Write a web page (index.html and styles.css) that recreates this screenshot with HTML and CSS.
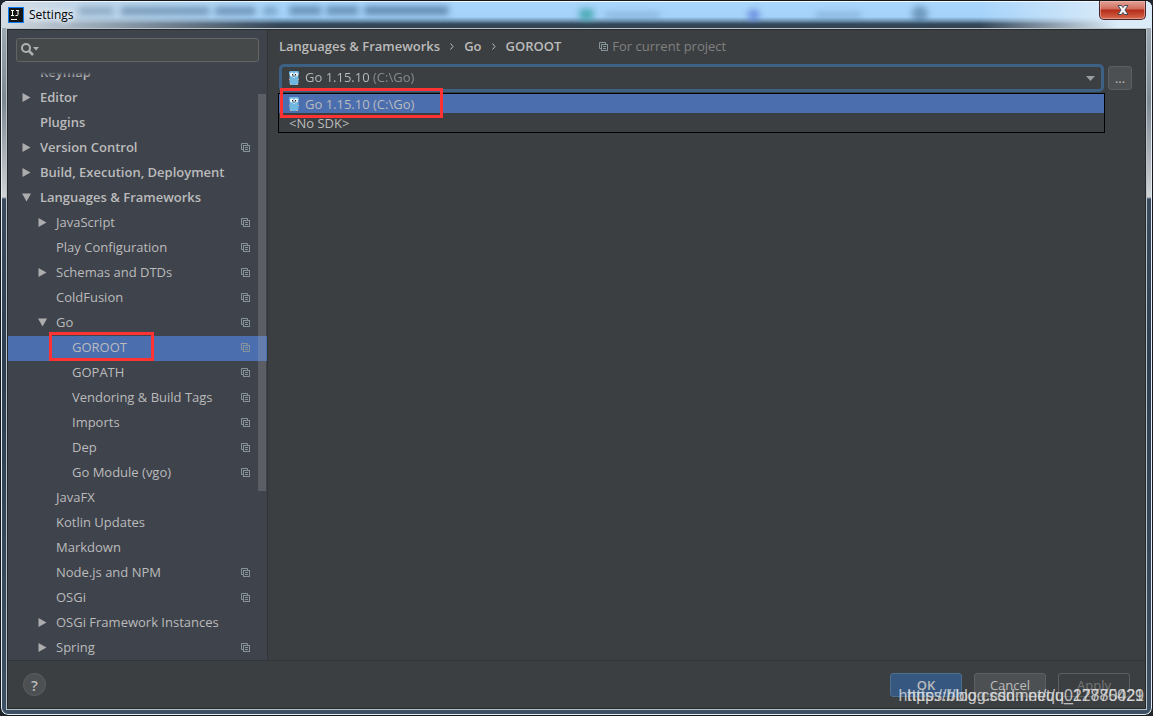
FILE: index.html
```
<!DOCTYPE html>
<html lang="en">
<head>
  <meta charset="UTF-8">
  <title>Settings</title>
  <link rel="stylesheet" href="styles.css">
</head>
<body>
  <svg class="defs" aria-hidden="true">
    <symbol id="copy" viewBox="0 0 9 9">
      <path d="M6.5 2V.5h-6v6H2" />
      <rect x="2.5" y="2.5" width="6" height="6" />
      <path d="M4 4.5h3M4 6.5h3" />
    </symbol>
    <symbol id="right" viewBox="0 0 8 9"><path d="M0 0l8 4.500l-8 4.500z" /></symbol>
    <symbol id="down" viewBox="0 0 9 8"><path d="M0 0h9l-4.500 8z" /></symbol>
    <symbol id="gopher" viewBox="0 0 10 14">
      <path fill="#6fb6e0" d="M1 0h8l1 1v2l-.500 1v8.500l-1 1.500h-7l-1-1.500v-8.500l-.500-1v-2z" />
      <path fill="#d9a88c" d="M0 8h1v1h-1zM9 8h1v1h-1zM1 13h1.500v1h-1.500zM7.500 13h1.500v1h-1.500z" />
      <circle cx="2.900" cy="3.500" r="1.900" fill="#fff" />
      <circle cx="7.100" cy="3.500" r="1.900" fill="#fff" />
      <path fill="#222" d="M3 3h1.200v1.500h-1.200zM6 3h1.200v1.500h-1.200zM4.300 4.800h1.400v.800h-1.400z" />
      <path fill="#fff" d="M4.300 5.800h1.400v1h-1.400z" />
    </symbol>
  </svg>

  <div class="window">
    <header class="titlebar">
      <svg class="behind" viewBox="0 0 1150 27" preserveAspectRatio="none" aria-hidden="true">
        <g fill="#3a5f85">
          <rect x="78" y="6" width="34" height="8" opacity=".35" />
          <rect x="120" y="6" width="88" height="8" opacity=".5" />
          <rect x="214" y="6" width="40" height="8" opacity=".55" />
          <rect x="262" y="6" width="14" height="8" opacity=".4" />
          <rect x="288" y="5" width="32" height="9" opacity=".55" />
          <rect x="325" y="5" width="32" height="9" opacity=".55" />
          <rect x="363" y="5" width="84" height="9" opacity=".6" />
          <rect x="604" y="11" width="54" height="6" opacity=".25" />
          <rect x="814" y="11" width="45" height="6" opacity=".25" />
          <circle cx="918" cy="13" r="8" opacity=".5" />
        </g>
        <rect x="578" y="8" width="14" height="11" fill="#2a9a9a" opacity=".7" />
        <circle cx="752" cy="14" r="6" fill="#4a68d0" opacity=".6" />
      </svg>
      <svg class="logo" viewBox="0 0 16 16" aria-hidden="true">
        <rect width="16" height="16" fill="#087cfa" />
        <rect x="1" y="1" width="14" height="14" fill="#161616" />
        <path d="M3 3.500h3M4.500 3.500v5M3 8.500h3M8 3.500h3M10 3.500v4q0 1-1 1h-1.500M3 12.500h6" fill="none" stroke="#fff" />
      </svg>
      <span class="title">Settings</span>
      <button class="close" aria-label="Close">
        <svg viewBox="0 0 12 10" aria-hidden="true">
          <path d="M1 .5h3.500l1.500 2l1.500-2h3.500l-3 4.500l3 4.500h-3.500l-1.500-2l-1.500 2h-3.500l3-4.500z" fill="#f5f5f5" stroke="#434859" />
        </svg>
      </button>
    </header>

    <div class="frame">
      <div class="main">
        <aside class="sidebar">
          <div class="search">
            <svg viewBox="0 0 18 14" aria-hidden="true">
              <circle cx="5" cy="5" r="4" fill="none" stroke="#afb1b3" stroke-width="2" />
              <path d="M8 8l4 4" stroke="#afb1b3" stroke-width="2.500" />
              <path d="M12 4h6l-3 3.500z" fill="#afb1b3" />
            </svg>
            <input type="text" aria-label="Search settings">
          </div>
          <nav class="tree">
            <ul>
              <li class="top"><a href="#">Keymap</a></li>
              <li class="top"><svg class="arrow"><use href="#right" /></svg><a href="#">Editor</a></li>
              <li class="top"><a href="#">Plugins</a></li>
              <li class="top"><svg class="arrow"><use href="#right" /></svg><a href="#">Version Control</a><svg class="copy"><use href="#copy" /></svg></li>
              <li class="top"><svg class="arrow"><use href="#right" /></svg><a href="#">Build, Execution, Deployment</a></li>
              <li class="top"><svg class="arrow"><use href="#down" /></svg><a href="#">Languages &amp; Frameworks</a></li>
              <li class="sub"><svg class="arrow"><use href="#right" /></svg><a href="#">JavaScript</a><svg class="copy"><use href="#copy" /></svg></li>
              <li class="sub"><a href="#">Play Configuration</a><svg class="copy"><use href="#copy" /></svg></li>
              <li class="sub"><svg class="arrow"><use href="#right" /></svg><a href="#">Schemas and DTDs</a><svg class="copy"><use href="#copy" /></svg></li>
              <li class="sub"><a href="#">ColdFusion</a><svg class="copy"><use href="#copy" /></svg></li>
              <li class="sub"><svg class="arrow"><use href="#down" /></svg><a href="#">Go</a><svg class="copy"><use href="#copy" /></svg></li>
              <li class="leaf selected"><a href="#">GOROOT</a><svg class="copy"><use href="#copy" /></svg><span class="mark"></span></li>
              <li class="leaf"><a href="#">GOPATH</a><svg class="copy"><use href="#copy" /></svg></li>
              <li class="leaf"><a href="#">Vendoring &amp; Build Tags</a><svg class="copy"><use href="#copy" /></svg></li>
              <li class="leaf"><a href="#">Imports</a><svg class="copy"><use href="#copy" /></svg></li>
              <li class="leaf"><a href="#">Dep</a><svg class="copy"><use href="#copy" /></svg></li>
              <li class="leaf"><a href="#">Go Module (vgo)</a><svg class="copy"><use href="#copy" /></svg></li>
              <li class="sub"><a href="#">JavaFX</a></li>
              <li class="sub"><a href="#">Kotlin Updates</a></li>
              <li class="sub"><a href="#">Markdown</a></li>
              <li class="sub"><a href="#">Node.js and NPM</a><svg class="copy"><use href="#copy" /></svg></li>
              <li class="sub"><a href="#">OSGi</a><svg class="copy"><use href="#copy" /></svg></li>
              <li class="sub"><svg class="arrow"><use href="#right" /></svg><a href="#">OSGi Framework Instances</a></li>
              <li class="sub"><svg class="arrow"><use href="#right" /></svg><a href="#">Spring</a><svg class="copy"><use href="#copy" /></svg></li>
            </ul>
            <div class="thumb"></div>
          </nav>
        </aside>

        <main class="panel">
          <div class="crumbs">
            <b>Languages &amp; Frameworks</b>
            <svg class="sep" viewBox="0 0 4 7"><path d="M.5 .5l2.500 3l-2.500 3" /></svg>
            <b>Go</b>
            <svg class="sep" viewBox="0 0 4 7"><path d="M.5 .5l2.500 3l-2.500 3" /></svg>
            <b>GOROOT</b>
            <span class="scope"><svg class="copy"><use href="#copy" /></svg>For current project</span>
          </div>
          <div class="sdk">
            <div class="combo">
              <select aria-label="GOROOT">
                <option>Go 1.15.10 (C:\Go)</option>
                <option>&lt;No SDK&gt;</option>
              </select>
              <svg class="gopher"><use href="#gopher" /></svg>
              <svg class="caret" viewBox="0 0 9 5"><path d="M0 0h9l-4.500 5z" /></svg>
              <ul class="popup" role="listbox" aria-label="SDK">
                <li class="selected" role="option" aria-selected="true"><svg class="gopher"><use href="#gopher" /></svg>Go 1.15.10 (C:\Go)<span class="mark"></span></li>
                <li role="option">&lt;No SDK&gt;</li>
              </ul>
            </div>
            <button class="more">...</button>
          </div>
        </main>
      </div>

      <footer class="footer">
        <button class="help">?</button>
        <button class="btn ok">OK</button>
        <button class="btn">Cancel</button>
        <button class="btn apply" disabled>Apply</button>
      </footer>
    </div>
    <div class="watermark">https://blog.csdn.net/qq_27870421</div>
    <div class="watermark">https://blog.csdn.net/u012785029</div>
  </div>
</body>
</html>
```

FILE: styles.css
```
* {
  box-sizing: border-box;
}

body {
  margin: 0;
  background: #20262c;
  color: #bbbbbb;
  font-family: "Open Sans", "Noto Sans", sans-serif;
  font-size: 13px;
  line-height: 18px;
}

ul {
  list-style: none;
  margin: 0;
  padding: 0;
}

a {
  color: inherit;
  text-decoration: none;
}

b {
  font-weight: 600;
}

button,
input,
select {
  font: inherit;
  color: inherit;
}

.defs {
  position: absolute;
  width: 0;
  height: 0;
}

.window {
  position: relative;
  display: flex;
  flex-direction: column;
  min-height: 100vh;
  padding: 0 5px 5px;
  border: 1px solid #14181c;
  border-radius: 8px;
  background: linear-gradient(#a9b3bd, #7d8791 100px, #d0d3d6 196px, #3a4b5e 198px, #2c3e50 50%, #3d5064);
  box-shadow: inset 0 0 0 1px #e4edf3;
}

/* title bar */
.titlebar {
  position: relative;
  display: flex;
  align-items: center;
  gap: 5px;
  height: 27px;
  margin: 0 -5px;
  padding-left: 7px;
  border-radius: 7px 7px 0 0;
  background: linear-gradient(#a9d6fb, #a4d2f9 16px, #6d90ae 20px, #34495d 23px, #34414e);
  box-shadow: inset 0 1px #f4faff;
  overflow: hidden;
}

.titlebar::before {
  content: "";
  position: absolute;
  inset: 1px 0 0;
  background: linear-gradient(90deg, #d5dce3 0, #c8d6e2bb 80px, #c0d8ee00 280px, #c0d8ee00 85%, #dcebf8 97%);
}

.behind {
  position: absolute;
  inset: 0;
  width: 100%;
  height: 27px;
  filter: blur(3px);
}

.logo {
  position: relative;
  width: 16px;
  height: 16px;
}

.title {
  position: relative;
  color: #000000;
  font-size: 12px;
  text-shadow: 0 0 6px #ffffff, 0 0 10px #ffffff;
}

.close {
  position: relative;
  display: flex;
  align-items: center;
  justify-content: center;
  align-self: flex-start;
  width: 47px;
  height: 19px;
  margin: 0 6px 0 auto;
  padding: 0;
  border: 1px solid #47222a;
  border-top: 0;
  border-radius: 0 0 5px 5px;
  background: linear-gradient(#e3a398, #cf6c5c 8px, #b52c17 9px, #d5684d);
  box-shadow: inset 0 0 0 1px #f0b9ad99;
}

.close svg {
  width: 12px;
  height: 10px;
}

/* dialog body */
.frame {
  display: flex;
  flex-direction: column;
  flex: 1;
  border: 1px solid #b9c3ca;
  outline: 1px solid #25292c;
  outline-offset: -2px;
  padding: 1px;
  background: #3c3f41;
}

.main {
  display: flex;
  flex: 1;
  border-bottom: 1px solid #323537;
}

.sidebar {
  display: flex;
  flex-direction: column;
  width: 260px;
  border-right: 1px solid #323537;
  background: #3f434c;
}

.search {
  display: flex;
  align-items: center;
  height: 24px;
  margin: 8px 8px 10px;
  padding-left: 4px;
  border: 1px solid #646464;
  border-radius: 3px;
  background: #45494a;
}

.search svg {
  width: 18px;
  height: 14px;
}

.search input {
  flex: 1;
  min-width: 0;
  border: 0;
  outline: 0;
  background: none;
}

/* the row heights fill the sidebar exactly, the last one ends on the footer line */
.tree {
  position: relative;
  flex: 1;
  overflow: hidden;
}

.tree::before {
  content: "";
  position: absolute;
  z-index: 1;
  inset: 0 0 auto;
  height: 5px;
  background: linear-gradient(#3f434c, #3f434c00);
}

.tree ul {
  margin-top: -11px;
  margin-bottom: -1px;
}

.tree li {
  position: relative;
  display: flex;
  align-items: center;
  height: 25px;
  padding-right: 17px;
  padding-bottom: 2px;
}

.tree a {
  padding-bottom: 2px;
}

.tree .top {
  padding-left: 32px;
  font-weight: 600;
}

.tree .sub {
  padding-left: 48px;
}

.tree .leaf {
  padding-left: 64px;
}

.arrow {
  width: 9px;
  height: 9px;
  margin-left: -18px;
  margin-right: 9px;
  fill: #adadad;
}

.copy {
  width: 9px;
  height: 9px;
  fill: none;
  stroke: #87939a;
}

.tree .copy {
  margin-left: auto;
}

.selected {
  background: #4b6eaf;
}

.mark {
  position: absolute;
  border: 3px solid #ff3333;
}

.tree .mark {
  left: 41px;
  top: -4px;
  width: 105px;
  height: 29px;
}

.thumb {
  position: absolute;
  top: 22px;
  right: 1px;
  width: 8px;
  height: 397px;
  background: #a6a6a647;
}

/* right side */
.panel {
  flex: 1;
  min-width: 0;
  padding: 7px 13px 0 11px;
}

.crumbs {
  display: flex;
  align-items: center;
  gap: 10px;
}

.sep {
  width: 4px;
  height: 7px;
  fill: none;
  stroke: #bbbbbb;
}

.scope {
  display: flex;
  align-items: center;
  gap: 4px;
  margin-left: 28px;
  color: #808080;
}

.sdk {
  display: flex;
  align-items: center;
  gap: 4px;
  margin-top: 9px;
}

.combo {
  position: relative;
  flex: 1;
}

.combo select {
  display: block;
  width: 100%;
  height: 28px;
  padding: 0 23px 2px;
  border: 3px solid #3d6185;
  border-radius: 5px;
  outline: 0;
  appearance: none;
  color: transparent;
  background:
    linear-gradient(90deg, #bbbbbb 88px, #8c8c8c 88px) text,
    #3c3f41;
}

.combo option {
  color: #bbbbbb;
}

.gopher {
  width: 10px;
  height: 14px;
}

.combo > .gopher {
  position: absolute;
  left: 10px;
  top: 7px;
}

.caret {
  position: absolute;
  right: 9px;
  top: 12px;
  width: 9px;
  height: 5px;
  fill: #9a9da0;
}

.popup {
  position: absolute;
  top: 29px;
  left: -1px;
  right: -1px;
  border: 1px solid #000000;
  background: #3c3f41;
}

.popup li {
  position: relative;
  display: flex;
  align-items: center;
  gap: 6px;
  height: 19px;
  padding-left: 10px;
  line-height: 16px;
}

.popup .mark {
  left: 1px;
  top: -6px;
  width: 163px;
  height: 30px;
}

.more {
  width: 24px;
  height: 24px;
  padding: 0;
  border: 1px solid #5e6060;
  border-radius: 3px;
  background: #4c5052;
}

/* buttons */
.footer {
  display: flex;
  align-items: center;
  gap: 12px;
  height: 47px;
  padding: 0 15px;
}

.help {
  width: 23px;
  height: 23px;
  margin-right: auto;
  padding: 0;
  border: 1px solid #5e6060;
  border-radius: 50%;
  background: #4c5052;
  font-size: 15px;
  font-weight: 600;
}

.btn {
  width: 72px;
  height: 24px;
  padding: 0;
  border: 1px solid #5e6060;
  border-radius: 3px;
  background: #4c5052;
}

.ok {
  border-color: #4c708c;
  background: #365880;
  font-weight: 600;
}

.apply {
  background: none;
  color: #777777;
}

.watermark {
  position: absolute;
  right: 8px;
  bottom: 10px;
  color: #e0e0e0cc;
  font-family: "Liberation Sans", Arial, sans-serif;
  font-size: 16px;
  pointer-events: none;
}
```
